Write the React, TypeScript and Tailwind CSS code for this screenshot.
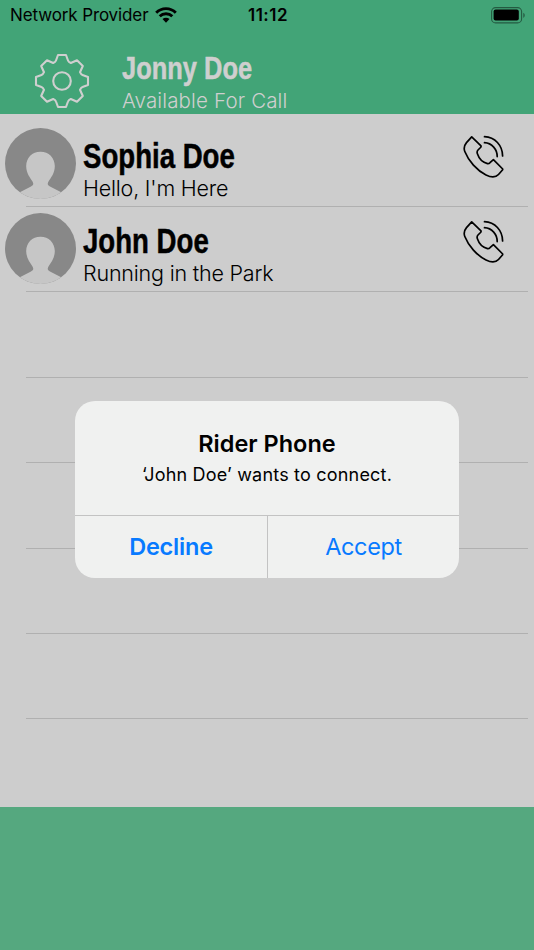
import { Fragment } from 'react'

interface Contact {
  name: string
  status: string
}

const contacts: Contact[] = [
  { name: 'Sophia Doe', status: "Hello, I'm Here" },
  { name: 'John Doe', status: 'Running in the Park' },
]

const emptyRows = [0, 1, 2, 3, 4]

function WifiIcon() {
  return (
    <svg width="22" height="16" viewBox="0 0 22 16" fill="none" stroke="#000" strokeWidth="2.9">
      <path d="M1.2 5.7a13.8 13.8 0 0 1 19.6 0" />
      <path d="M4.7 9.3a9 9 0 0 1 12.6 0" />
      <path d="M7.5 12.1a5 5 0 0 1 7 0L11 15.7z" fill="#000" stroke="none" />
    </svg>
  )
}

function BatteryIcon() {
  return (
    <svg width="35" height="17" viewBox="0 0 35 17">
      <rect x="0.6" y="0.6" width="30" height="15.3" rx="4" fill="none" stroke="#000" strokeOpacity="0.45" strokeWidth="1.1" />
      <rect x="2.6" y="2.6" width="25.2" height="11" rx="2" />
      <path d="M32.3 5.7c1.9.7 1.9 4.4 0 5.1z" fillOpacity="0.45" />
    </svg>
  )
}

function GearIcon() {
  return (
    <svg
      width="56"
      height="56"
      viewBox="-28 -28 56 56"
      fill="none"
      stroke="#cfcfcf"
      strokeWidth="2.1"
      strokeLinejoin="round"
    >
      <path d="M-4-26H4L6-20.5Q6.5-19 8.8-18L15-20.8L20.8-15L18-8.8Q19-6.5 20.5-6L26-4V4L20.5 6Q19 6.5 18 8.8L20.8 15L15 20.8L8.8 18Q6.5 19 6 20.5L4 26H-4L-6 20.5Q-6.5 19-8.8 18L-15 20.8L-20.8 15L-18 8.8Q-19 6.5-20.5 6L-26 4V-4L-20.5-6Q-19-6.5-18-8.8L-20.8-15L-15-20.8L-8.8-18Q-6.5-19-6-20.5Z" />
      <circle r="8.8" />
    </svg>
  )
}

function Avatar() {
  return (
    <svg width="71" height="71" viewBox="0 0 71 71" className="shrink-0">
      <circle cx="35.5" cy="35.5" r="35.5" fill="#888888" />
      <path
        d="M35.5 23.7C27 23.7 21 30 21.2 38.5C21.4 45.5 25 49.5 27.5 53.5C28.8 55.8 28.5 57 26 58.4L14.8 64.3A35.5 35.5 0 0 0 56.2 64.3L45 58.4C42.5 57 42.2 55.8 43.5 53.5C46 49.5 49.6 45.5 49.8 38.5C50 30 44 23.7 35.5 23.7Z"
        fill="#c6c6c6"
      />
    </svg>
  )
}

function CallIcon() {
  return (
    <svg
      width="44"
      height="46"
      viewBox="0 0 44 46"
      fill="none"
      stroke="#000"
      strokeWidth="1.7"
      strokeLinejoin="round"
      strokeLinecap="round"
    >
      <path d="M9.7 2.9L19 11.8Q19.3 12.5 18.5 13.5L16 16Q14.5 17.5 15.5 20C17 24.5 21 28.5 25.5 29.6Q27 29.8 28 28.7L31.4 25.6L40.7 35Q40.9 35.5 40 36.5L36.5 40.5C33.5 43.8 29 43.5 24 41C15 36.5 6.5 27 2.8 17.5C1.5 14 2.5 11 4.5 8.6Z" />
      <path d="M22.5 2.7C33 3 40.5 11.5 40.6 22" />
      <path d="M22.5 8.7C30 9 35.3 15.5 35.2 22.6" />
    </svg>
  )
}

function ContactRow({ name, status }: Contact) {
  return (
    <li className="flex h-[84.4px]">
      <div className="shrink-0 pt-[6.5px] pl-[5px]">
        <Avatar />
      </div>
      <div className="flex-1 pt-[15px] pl-[7px] whitespace-nowrap">
        <h2 className="origin-left scale-x-[0.8] text-[34.5px] leading-[38px] font-bold [-webkit-text-stroke:0.5px_#000]">
          {name}
        </h2>
        <p className="font-['Inter',sans-serif] text-[21.5px] leading-[26px] font-light tracking-[-0.2px]">{status}</p>
      </div>
      <button className="mt-3 mr-[28px] h-[46px]">
        <CallIcon />
      </button>
    </li>
  )
}

export default function App() {
  return (
    <div className="relative flex h-[950px] w-[534px] flex-col overflow-hidden bg-[#cdcdcd] font-['Liberation_Sans',sans-serif] text-black">
      <header className="h-[114px] bg-[#42a477]">
        <div className="grid h-[30px] grid-cols-3 items-center pr-2 pl-[10px] font-['Inter',sans-serif] text-[17px]">
          <div className="flex items-center gap-[7px] whitespace-nowrap">
            <span className="pt-px tracking-[-0.12px]">Network Provider</span>
            <WifiIcon />
          </div>
          <span className="pt-px text-center font-semibold tracking-[0.5px]">11:12</span>
          <div className="flex justify-end">
            <BatteryIcon />
          </div>
        </div>
        <div className="flex pl-[34px] text-[#cfcfcf]">
          <div className="pt-[23px]">
            <GearIcon />
          </div>
          <div className="pt-[20px] pl-[32px] whitespace-nowrap">
            <h1 className="origin-left scale-x-[0.808] text-[31.5px] leading-[37px] font-bold [-webkit-text-stroke:0.5px_#cfcfcf]">
              Jonny Doe
            </h1>
            <p className="pt-px font-['Inter',sans-serif] text-[20.5px] leading-[26px] font-light tracking-[0.15px]">
              Available For Call
            </p>
          </div>
        </div>
      </header>

      <main className="flex-1 pt-[7.6px]">
        <ul>
          {contacts.map((contact) => (
            <Fragment key={contact.name}>
              <ContactRow {...contact} />
              <li className="mr-[6px] ml-[26px] h-px bg-[#b0b0b0]" />
            </Fragment>
          ))}
          {emptyRows.map((row) => (
            <li key={row} className="mr-[6px] ml-[26px] h-[85.4px] border-b border-[#b0b0b0]" />
          ))}
        </ul>
      </main>

      <footer className="h-[143px] bg-[#55a87f]" />

      {/* Incoming call alert */}
      <div className="absolute inset-x-[75px] top-[401px] flex h-[177px] flex-col overflow-hidden rounded-[20px] bg-[#f0f1f0] font-['Inter',sans-serif]">
        <div className="h-[115px] border-b border-[#c3c3c3] pt-[27px] text-center">
          <h3 className="text-[23.5px] leading-[31px] font-semibold">Rider Phone</h3>
          <p className="pt-px text-[18px] leading-[30px] tracking-[0.2px]">‘John Doe’ wants to connect.</p>
        </div>
        <div className="flex flex-1 text-[23.5px] text-[#087aff]">
          <button className="w-[193px] border-r border-[#c3c3c3] font-semibold tracking-[-0.2px]">Decline</button>
          <button className="flex-1 tracking-[-0.4px]">Accept</button>
        </div>
      </div>
    </div>
  )
}
